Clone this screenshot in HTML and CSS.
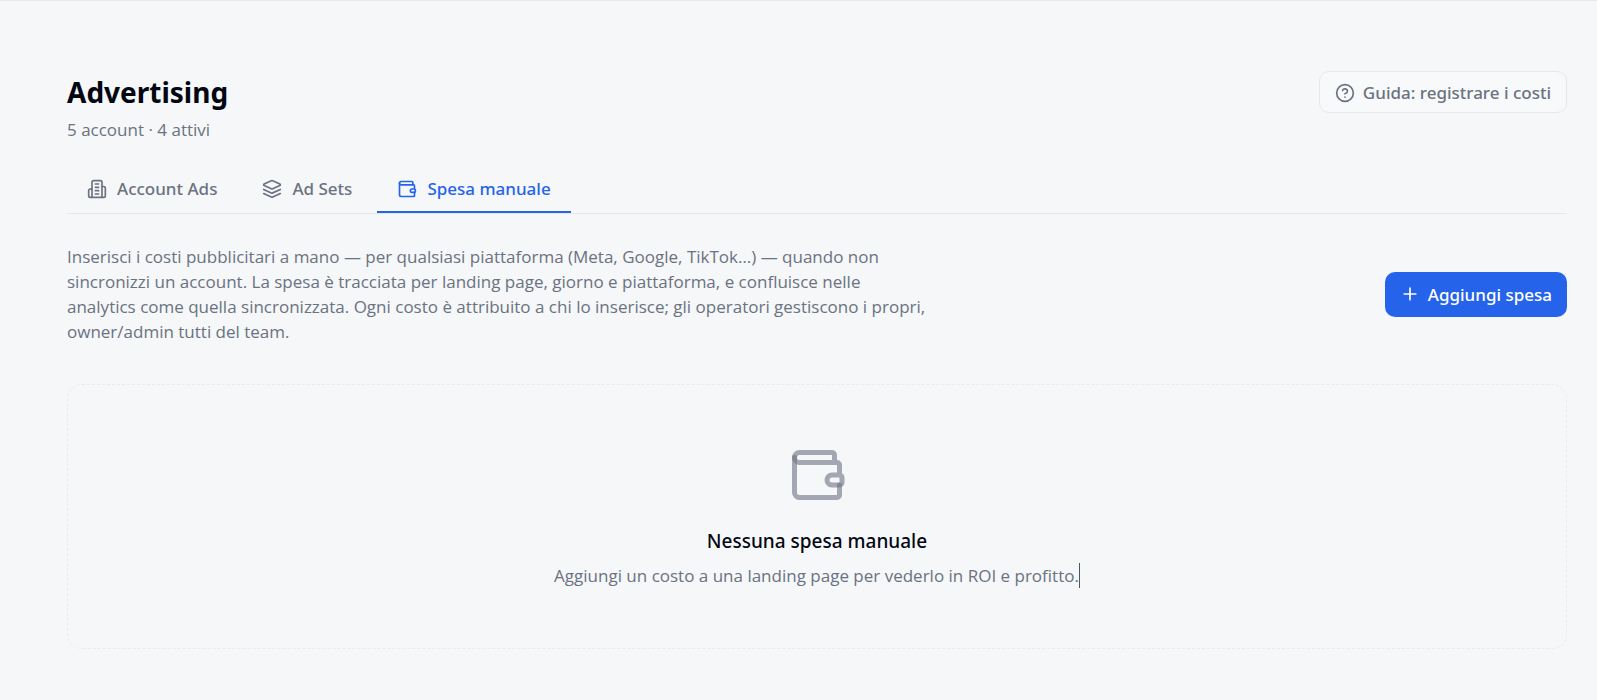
FILE: index.html
```html
<!DOCTYPE html>
<html lang="it">
<head>
    <meta charset="UTF-8">
    <meta name="viewport" content="width=device-width, initial-scale=1.0">
    <title>Advertising</title>
    <link rel="stylesheet" href="styles.css">
</head>
<body>
    <main class="page">
        <header class="page-header">
            <div>
                <h1 class="page-title">Advertising</h1>
                <p class="page-subtitle">5 account · 4 attivi</p>
            </div>
            <button type="button" class="btn btn-outline">
                <svg class="icon" viewBox="0 0 24 24" aria-hidden="true">
                    <circle cx="12" cy="12" r="10"/>
                    <path d="M9.09 9a3 3 0 0 1 5.83 1c0 2-3 3-3 3"/>
                    <path d="M12 17h.01"/>
                </svg>
                Guida: registrare i costi
            </button>
        </header>

        <nav class="tabs">
            <a href="#account" class="tab">
                <svg class="icon" viewBox="0 0 24 24" aria-hidden="true">
                    <path d="M6 22V4a2 2 0 0 1 2-2h8a2 2 0 0 1 2 2v18Z"/>
                    <path d="M6 12H4a2 2 0 0 0-2 2v6a2 2 0 0 0 2 2h2"/>
                    <path d="M18 9h2a2 2 0 0 1 2 2v9a2 2 0 0 1-2 2h-2"/>
                    <path d="M10 6h4M10 10h4M10 14h4M10 18h4"/>
                </svg>
                Account Ads
            </a>
            <a href="#adsets" class="tab">
                <svg class="icon" viewBox="0 0 24 24" aria-hidden="true">
                    <path d="m12.83 2.18a2 2 0 0 0-1.66 0L2.6 6.08a1 1 0 0 0 0 1.83l8.58 3.91a2 2 0 0 0 1.66 0l8.58-3.9a1 1 0 0 0 0-1.83Z"/>
                    <path d="m22 12.5-9.17 4.16a2 2 0 0 1-1.66 0L2 12.5"/>
                    <path d="m22 17.5-9.17 4.16a2 2 0 0 1-1.66 0L2 17.5"/>
                </svg>
                Ad Sets
            </a>
            <a href="#spesa" class="tab active" aria-current="page">
                <svg class="icon" viewBox="0 0 24 24" aria-hidden="true">
                    <path d="M19 7V4a1 1 0 0 0-1-1H5a2 2 0 0 0 0 4h15a1 1 0 0 1 1 1v4h-3a2 2 0 0 0 0 4h3a1 1 0 0 0 1-1v-2a1 1 0 0 0-1-1"/>
                    <path d="M3 5v14a2 2 0 0 0 2 2h15a1 1 0 0 0 1-1v-4"/>
                </svg>
                Spesa manuale
            </a>
        </nav>

        <section class="intro">
            <p class="intro-text">Inserisci i costi pubblicitari a mano — per qualsiasi piattaforma (Meta, Google, TikTok…) — quando non sincronizzi un account. La spesa è tracciata per landing page, giorno e piattaforma, e confluisce nelle analytics come quella sincronizzata. Ogni costo è attribuito a chi lo inserisce; gli operatori gestiscono i propri, owner/admin tutti del team.</p>
            <button type="button" class="btn btn-primary">
                <svg class="icon" viewBox="0 0 24 24" aria-hidden="true">
                    <path d="M5 12h14M12 5v14"/>
                </svg>
                Aggiungi spesa
            </button>
        </section>

        <section class="empty">
            <svg class="empty-icon" viewBox="0 0 24 24" aria-hidden="true">
                <path d="M19 7V4a1 1 0 0 0-1-1H5a2 2 0 0 0 0 4h15a1 1 0 0 1 1 1v4h-3a2 2 0 0 0 0 4h3a1 1 0 0 0 1-1v-2a1 1 0 0 0-1-1"/>
                <path d="M3 5v14a2 2 0 0 0 2 2h15a1 1 0 0 0 1-1v-4"/>
            </svg>
            <h2 class="empty-title">Nessuna spesa manuale</h2>
            <p class="empty-text">Aggiungi un costo a una landing page per vederlo in ROI e profitto.</p>
        </section>
    </main>
</body>
</html>
```
FILE: styles.css
```css
* {
    box-sizing: border-box;
}

body {
    margin: 0;
    border-top: 1px solid #e5e7eb;
    background-color: #f5f7f9;
    color: #030712;
    font-family: 'Segoe UI', 'Noto Sans', sans-serif;
    font-size: 17px;
    line-height: 25px;
}

h1, h2, p {
    margin: 0;
}

.page {
    padding: 70px 30px 50px 67px;
}

.page-header {
    display: flex;
    justify-content: space-between;
    align-items: flex-start;
    margin-bottom: 24px;
}

.page-title {
    font-size: 28px;
    line-height: 42px;
    font-weight: 700;
    margin-bottom: 4px;
}

.page-subtitle,
.intro-text,
.empty-text {
    color: #6b7280;
    font-family: 'Segoe UI', 'Open Sans', sans-serif;
}

.icon {
    width: 20px;
    height: 20px;
    flex-shrink: 0;
    fill: none;
    stroke: currentColor;
    stroke-width: 2;
    stroke-linecap: round;
    stroke-linejoin: round;
}

.btn {
    display: inline-flex;
    align-items: center;
    flex-shrink: 0;
    gap: 8px;
    border-radius: 10px;
    font: inherit;
    font-weight: 500;
    cursor: pointer;
}

.btn-outline {
    padding: 8px 15px 7px;
    border: 1px solid #e5e7eb;
    background-color: #f7f9fa;
    color: #6b7280;
}

.btn-primary {
    padding: 10px 15px;
    border: none;
    background-color: #2563eb;
    color: #fff;
}

.tabs {
    display: flex;
    gap: 5px;
    border-bottom: 1px solid #e5e7eb;
}

.tab {
    display: flex;
    align-items: center;
    gap: 10px;
    padding: 10px 20px;
    border-bottom: 2px solid transparent;
    color: #6b7280;
    font-weight: 500;
    text-decoration: none;
}

.tab.active {
    border-bottom-color: #2563eb;
    color: #2563eb;
}

.intro {
    display: flex;
    justify-content: space-between;
    align-items: center;
    gap: 20px;
    margin: 30px 0 40px;
}

.intro-text {
    max-width: 864px;
}

.empty {
    display: flex;
    flex-direction: column;
    align-items: center;
    padding: 60px 20px;
    border: 1px dashed #e9ebee;
    border-radius: 15px;
    text-align: center;
}

.empty-icon {
    width: 60px;
    height: 60px;
    margin-bottom: 20px;
    fill: none;
    stroke: rgba(107, 114, 128, 0.6);
    stroke-width: 2;
    stroke-linecap: round;
    stroke-linejoin: round;
}

.empty-title {
    font-size: 19px;
    line-height: 32px;
    font-weight: 500;
    margin-bottom: 6px;
}

/* text cursor at the end of the line */
.empty-text {
    border-right: 1px solid #4b5563;
}
```
